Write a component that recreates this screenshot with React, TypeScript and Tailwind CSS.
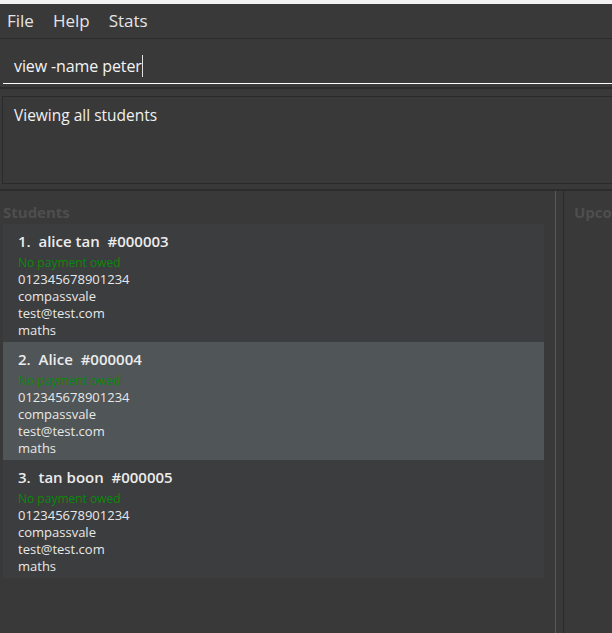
import React from "react";

const students = [
  { idx: 1, name: "alice tan", id: "#000003", selected: false },
  { idx: 2, name: "Alice", id: "#000004", selected: true },
  { idx: 3, name: "tan boon", id: "#000005", selected: false },
];

function Card({ s }: { s: (typeof students)[number] }) {
  return (
    <div
      className={`h-[118px] pl-[15px] pt-[6px] ${s.selected ? "bg-[#505557]" : "bg-[#3c3d3f]"}`}
    >
      <div className="text-[15px] leading-[22px] font-semibold text-[#ececec] whitespace-pre">
        {`${s.idx}.  ${s.name}  ${s.id}`}
      </div>
      <div className="text-[12px] leading-[16px] text-[#0a8a0a] mt-[3px]">No payment owed</div>
      <div className="text-[13px] leading-[17px] text-[#e8e8e8]">
        <div>012345678901234</div>
        <div>compassvale</div>
        <div>test@test.com</div>
        <div>maths</div>
      </div>
    </div>
  );
}

export default function App() {
  return (
    <div
      className="w-[612px] h-[633px] overflow-hidden bg-[#393939] flex flex-col"
      style={{ fontFamily: '"Open Sans", "Noto Sans", sans-serif' }}
    >
      <div className="h-[4px] bg-[#f2f2f2] shrink-0" />
      {/* menu bar */}
      <div className="h-[35px] shrink-0 flex items-center gap-[19px] pl-[7px] text-[17px] text-[#e4e4e4] border-b border-[#2b2b2b]">
        <span>File</span>
        <span>Help</span>
        <span>Stats</span>
      </div>
      {/* command box */}
      <div className="h-[48px] shrink-0 pl-[3px] flex flex-col justify-end pb-[3px]">
        <div className="border-b border-white h-[33px] flex items-center pl-[11px] pb-[2px] text-[16px] text-[#f4f4f4]">
          <span className="tracking-[-0.1px]">view -name peter</span>
          <span className="inline-block w-[1px] h-[22px] bg-[#e0e0e0]" />
        </div>
      </div>
      <div className="h-[2px] shrink-0 bg-[#2c2c2c]" />
      {/* result display */}
      <div className="h-[100px] shrink-0 pt-[7px] pl-[2px] pb-[5px]">
        <div className="h-full border border-[#2a2a2a] border-r-0 pl-[11px] pt-[7px] text-[15.5px] text-[#f0f0f0]">
          Viewing all students
        </div>
      </div>
      <div className="h-[2px] shrink-0 bg-[#2c2c2c]" />
      {/* lower panes */}
      <div className="flex-1 flex min-h-0">
        <div className="w-[556px] shrink-0 border-r border-[#5a5a5a] pl-[3px] pr-[11px] flex flex-col">
          <div className="h-[33px] pt-[11px] leading-[20px] text-[15px] font-bold text-[#4e4e4e]">Students</div>
          <div className="flex flex-col">
            {students.map((s) => (
              <Card key={s.idx} s={s} />
            ))}
          </div>
        </div>
        <div className="w-[7px] shrink-0" />
        <div className="flex-1 min-w-0 overflow-hidden border-l border-[#2a2a2a] pl-[10px]">
          <div className="h-[33px] pt-[11px] leading-[20px] text-[15px] font-bold text-[#4e4e4e] whitespace-nowrap">
            Upcoming
          </div>
        </div>
      </div>
    </div>
  );
}
